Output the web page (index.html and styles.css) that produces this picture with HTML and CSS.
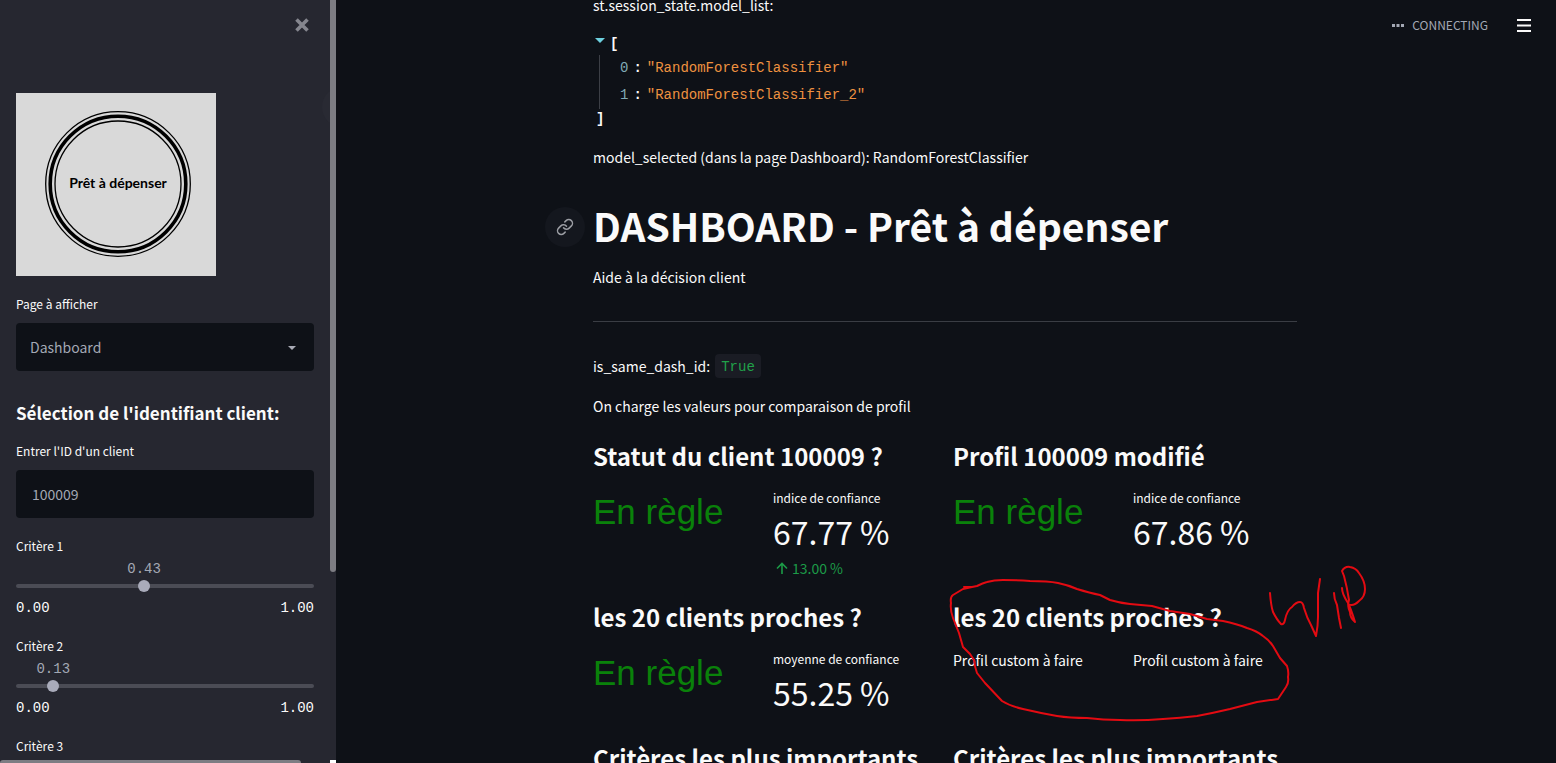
FILE: index.html
```html
<!DOCTYPE html>
<html lang="fr">
<head>
<meta charset="utf-8">
<meta name="viewport" content="width=device-width, initial-scale=1">
<title>Dashboard - Prêt à dépenser</title>
<link rel="stylesheet" href="styles.css">
</head>
<body>
<div class="app">
  <aside class="sidebar">
    <div class="sidebar-content">
      <div class="sidebar-top">
        <button class="close" type="button" aria-label="Fermer">
          <svg width="14" height="14" viewBox="0 0 14 14"><path d="M1.5 1.5L12.5 12.5M12.5 1.5L1.5 12.5" stroke="currentColor" stroke-width="3.6"/></svg>
        </button>
      </div>
      <svg class="logo" width="200" height="183" viewBox="0 0 200 183" role="img" aria-label="Prêt à dépenser">
        <rect width="200" height="183" fill="#d9d9d9"/>
        <g fill="none" stroke="#000">
          <circle cx="102" cy="91" r="72.3" stroke-width="1.3"/>
          <circle cx="102" cy="91" r="67.8" stroke-width="3.6"/>
          <circle cx="102" cy="91" r="63" stroke-width="1.3"/>
        </g>
        <text class="logo-text" x="102" y="95" text-anchor="middle">Prêt à dépenser</text>
      </svg>
      <div class="field">
        <label for="page">Page à afficher</label>
        <div class="select-wrap">
          <select id="page"><option>Dashboard</option></select>
          <svg class="caret" width="8" height="4" viewBox="0 0 8 4"><path d="M0 0H8L4 4Z" fill="#a9abb6"/></svg>
        </div>
      </div>
      <h3 class="side-title">Sélection de l'identifiant client:</h3>
      <div class="field">
        <label for="client">Entrer l'ID d'un client</label>
        <input class="text-input" id="client" type="text" value="100009">
      </div>
      <div class="slider">
        <label for="c1">Critère 1</label>
        <div class="value-row"><output class="value" for="c1" style="left:43%">0.43</output></div>
        <div class="rail"><input id="c1" type="range" min="0" max="1" step="0.01" value="0.43"></div>
        <div class="ticks"><span>0.00</span><span>1.00</span></div>
      </div>
      <div class="slider">
        <label for="c2">Critère 2</label>
        <div class="value-row"><output class="value" for="c2" style="left:12.5%">0.13</output></div>
        <div class="rail"><input id="c2" type="range" min="0" max="1" step="0.005" value="0.125"></div>
        <div class="ticks"><span>0.00</span><span>1.00</span></div>
      </div>
      <div class="slider">
        <label for="c3">Critère 3</label>
        <div class="value-row"></div>
        <div class="rail"><input id="c3" type="range" min="0" max="1" step="0.01" value="0.5"></div>
      </div>
    </div>
    <div class="halo"></div>
    <div class="scroll-y"></div>
    <div class="scroll-x"></div>
    <div class="scroll-corner"></div>
  </aside>

  <main class="main">
    <header class="toolbar">
      <div class="status">
        <svg width="12" height="3" viewBox="0 0 12 3"><path d="M0 0H3V3H0ZM4.5 0H7.5V3H4.5ZM9 0H12V3H9Z" fill="currentColor"/></svg>
        <span>CONNECTING</span>
      </div>
      <button class="menu" type="button" aria-label="Menu">
        <svg width="14" height="14" viewBox="0 0 14 14"><path d="M0 2H14M0 7.5H14M0 13H14" stroke="currentColor" stroke-width="1.8"/></svg>
      </button>
    </header>

    <div class="content">
      <p>st.session_state.model_list:</p>
      <div class="json">
        <div class="json-open"><svg width="10" height="5" viewBox="0 0 10 5"><path d="M0 0H10L5 5Z" fill="#6dd0df"/></svg><b>[</b></div>
        <div class="json-items">
          <div class="json-row"><span class="key">0</span><b>:</b><span class="str">"RandomForestClassifier"</span></div>
          <div class="json-row"><span class="key">1</span><b>:</b><span class="str">"RandomForestClassifier_2"</span></div>
        </div>
        <div class="json-close"><b>]</b></div>
      </div>
      <p>model_selected (dans la page Dashboard): RandomForestClassifier</p>
      <h1>
        <a class="anchor" href="#dashboard" aria-label="Lien vers cette section">
          <svg width="18" height="18" viewBox="0 0 24 24" fill="none" stroke="currentColor" stroke-width="2" stroke-linecap="round" stroke-linejoin="round"><path d="M10 13a5 5 0 0 0 7.54.54l3-3a5 5 0 0 0-7.07-7.07l-1.72 1.71"/><path d="M14 11a5 5 0 0 0-7.54-.54l-3 3a5 5 0 0 0 7.07 7.07l1.71-1.71"/></svg>
        </a>DASHBOARD - Prêt à dépenser
      </h1>
      <p>Aide à la décision client</p>
      <hr>
      <p>is_same_dash_id: <code>True</code></p>
      <p>On charge les valeurs pour comparaison de profil</p>

      <div class="columns">
        <section>
          <h2>Statut du client 100009 ?</h2>
          <div class="pair">
            <div class="verdict">En règle</div>
            <div class="metric">
              <div class="metric-label">indice de confiance</div>
              <div class="metric-value">67.77 %</div>
              <div class="metric-delta"><svg width="12" height="12" viewBox="0 0 12 12"><path d="M6 12V1.5M1 6.5L6 1.5L11 6.5" fill="none" stroke="currentColor" stroke-width="1.6"/></svg>13.00 %</div>
            </div>
          </div>
        </section>
        <section>
          <h2>Profil 100009 modifié</h2>
          <div class="pair">
            <div class="verdict">En règle</div>
            <div class="metric">
              <div class="metric-label">indice de confiance</div>
              <div class="metric-value">67.86 %</div>
            </div>
          </div>
        </section>
        <section>
          <h2>les 20 clients proches ?</h2>
          <div class="pair">
            <div class="verdict">En règle</div>
            <div class="metric">
              <div class="metric-label">moyenne de confiance</div>
              <div class="metric-value">55.25 %</div>
            </div>
          </div>
        </section>
        <section class="annotated">
          <h2>les 20 clients proches ?</h2>
          <div class="pair">
            <p>Profil custom à faire</p>
            <p>Profil custom à faire</p>
          </div>
          <svg class="pen" width="425" height="170" viewBox="945 560 425 170" fill="none" stroke="#e30b12" stroke-width="2" stroke-linecap="round" stroke-linejoin="round">
            <path d="M964 587L972 587L977 586Q983 583 987 582Q994 580 1003 580Q1018 580 1030 581Q1048 581 1058 583Q1068 585 1077 589Q1090 593 1100 595L1110 600Q1120 603 1130 604L1152 606L1170 611L1190 614L1207 619L1223 621Q1237 624 1247 628Q1257 631 1263 636Q1269 640 1273 646L1280 658L1287 666Q1289 672 1288 677Q1289 683 1286 687L1278 699L1257 702L1230 709Q1213 713 1197 716Q1180 718 1163 719Q1140 721 1120 720Q1103 720 1087 718Q1070 718 1057 716Q1040 713 1023 709Q1010 706 1002 701L985 683L977 673Q975 668 974 660L970 654L963 647Q961 640 959 633L953 618Q950 610 951 603Q950 597 953 595L963 589L972 587"/>
            <path d="M1270 593Q1271 606 1273 612Q1277 620 1281 624Q1284 625 1285 620Q1287 610 1292 607Q1296 602 1300 602Q1303 602 1304 608Q1307 618 1311 625L1316 636Q1318 626 1318 617L1318 593L1320 579"/>
            <path d="M1334 593Q1334 599 1337 605L1339 618L1341 628"/>
            <path d="M1342 588Q1342 594 1348 603Q1351 609 1355 622Q1350 618 1350 612Q1347 606 1349 600Q1347 587 1344 576L1342 571Q1345 566 1350 567Q1356 568 1359 573Q1365 581 1365 589Q1365 597 1359 601Q1353 607 1348 604"/>
          </svg>
        </section>
        <section><h2>Critères les plus importants</h2></section>
        <section><h2>Critères les plus importants</h2></section>
      </div>
    </div>
  </main>
</div>
</body>
</html>
```
FILE: styles.css
```css
* { box-sizing: border-box; }

body {
  margin: 0;
  background: #0e1117;
  color: #fafafa;
  font: 14px/24px "Noto Sans CJK SC", "Noto Sans", sans-serif;
}

h1, h2, h3, p { margin: 0; }
button { padding: 0; border: 0; background: none; font: inherit; cursor: pointer; }
svg { display: block; }

.app { display: flex; height: 100vh; overflow: hidden; }

/* Sidebar */
.sidebar {
  position: relative;
  flex: 0 0 336px;
  overflow: hidden;
  background: #262730;
}
.sidebar-content { padding: 0 22px 0 16px; }
.sidebar-top {
  display: flex;
  justify-content: flex-end;
  height: 93px;
  padding: 18px 5px 0 0;
}
.close { height: 14px; color: #85868e; }
.logo { margin-bottom: 17px; }
.logo-text { font: bold 14px Lato, sans-serif; fill: #000; }

.sidebar label { display: block; font-size: 12px; line-height: 22px; }
.field label { margin-bottom: 8px; }
.select-wrap { position: relative; }
.select-wrap select, .text-input {
  display: block;
  width: 100%;
  height: 48px;
  border: 0;
  border-radius: 4px;
  background: #0e1117;
  color: #a3a8b4;
  font: 14px/24px "Noto Sans CJK SC", "Noto Sans", sans-serif;
}
.select-wrap select { padding: 0 14px; appearance: none; }
.text-input { padding: 0 16px; }
.caret { position: absolute; top: 23px; right: 18px; pointer-events: none; }
.side-title { margin: 28px 0 13px; font-size: 17px; line-height: 28px; }

.slider { margin-top: 17px; }
.value-row { position: relative; height: 23px; }
.value {
  position: absolute;
  transform: translateX(-50%);
  color: #a3a8b4;
  font: 14px/24px "Liberation Mono", monospace;
}
.rail { display: grid; align-items: center; height: 12px; }
.rail::before {
  content: "";
  grid-area: 1 / 1;
  height: 4px;
  border-radius: 4px;
  background: #4b4c55;
}
.rail input {
  grid-area: 1 / 1;
  height: 12px;
  margin: 0 -6px;
  appearance: none;
  background: none;
}
.rail input::-webkit-slider-thumb {
  appearance: none;
  width: 12px;
  height: 12px;
  border-radius: 50%;
  background: #a9abba;
}
.ticks {
  display: flex;
  justify-content: space-between;
  padding-top: 6px;
  font: 14px/20px "Liberation Mono", monospace;
}

.halo {
  position: absolute;
  top: 87px;
  right: -26px;
  width: 40px;
  height: 40px;
  border-radius: 50%;
  background: #292a33;
}
.scroll-y, .scroll-x, .scroll-corner { position: absolute; background: #7d7d83; }
.scroll-y { top: 0; right: 0; width: 6px; height: 75%; border-radius: 0 0 3px 3px; }
.scroll-x { bottom: 0; left: 0; width: 301px; height: 3px; border-radius: 3px 3px 0 0; }
.scroll-corner { right: 0; bottom: 0; width: 6px; height: 3px; background: #fff; }

/* Main area */
.main { position: relative; flex: 1; min-width: 0; overflow: hidden; }
.toolbar {
  position: absolute;
  top: 13px;
  right: 25px;
  display: flex;
  align-items: center;
  gap: 29px;
}
.status {
  display: flex;
  align-items: center;
  gap: 8px;
  color: #a3a8b4;
  font-size: 12px;
}
.menu { color: #fafafa; }

.content { width: 100%; max-width: 706px; margin: -7px auto 0; padding-right: 2px; }
.content > p + p { margin-top: 16px; }

.json {
  margin: 15px 0 16px;
  font: 14px/27px "Liberation Mono", monospace;
}
.json-open { display: flex; align-items: center; gap: 5px; height: 23px; padding: 2px 0 0 2px; }
.json-open svg { margin-bottom: 9px; }
.json-items { margin-left: 6px; padding-left: 20px; border-left: 1px solid #3c3f46; }
.json-row { display: flex; gap: 5px; }
.key { color: #81a9b5; }
.str { color: #ee9140; }
.json-close { height: 20px; padding-left: 3px; line-height: 20px; }

h1 {
  position: relative;
  margin: 26px 0 10px;
  font-size: 39px;
  line-height: 60px;
}
.anchor {
  position: absolute;
  top: 12px;
  left: -48px;
  display: grid;
  place-items: center;
  width: 40px;
  height: 40px;
  border-radius: 50%;
  background: #14171e;
  color: #9b9da3;
}
hr { margin: 32px 0; border: 0; border-top: 1px solid #3a3d44; }
code {
  display: inline-block;
  margin-left: 2px;
  padding: 2px 6px 0;
  border-radius: 4px;
  background: #1a1c24;
  color: #21a14a;
  font: 14px/22px "Liberation Mono", monospace;
  vertical-align: top;
}

.columns { display: grid; grid-template-columns: 1fr 1fr; gap: 16px; margin-top: 20px; }
h2 { font-size: 24px; line-height: 36px; white-space: nowrap; }
.pair { display: grid; grid-template-columns: 1fr 1fr; gap: 16px; min-height: 76px; margin-top: 13px; }
.verdict { color: #0a810a; font: 35px/50px "Liberation Sans", sans-serif; }
.metric-label { font-size: 12px; line-height: 22px; }
.metric-value { font-size: 32px; line-height: 44px; }
.metric-delta {
  display: flex;
  align-items: center;
  gap: 4px;
  padding-left: 3px;
  color: #1c9b47;
  line-height: 30px;
}

/* Handwritten note drawn over the section */
.annotated { position: relative; }
.pen { position: absolute; top: -39px; left: -8px; pointer-events: none; }
```
